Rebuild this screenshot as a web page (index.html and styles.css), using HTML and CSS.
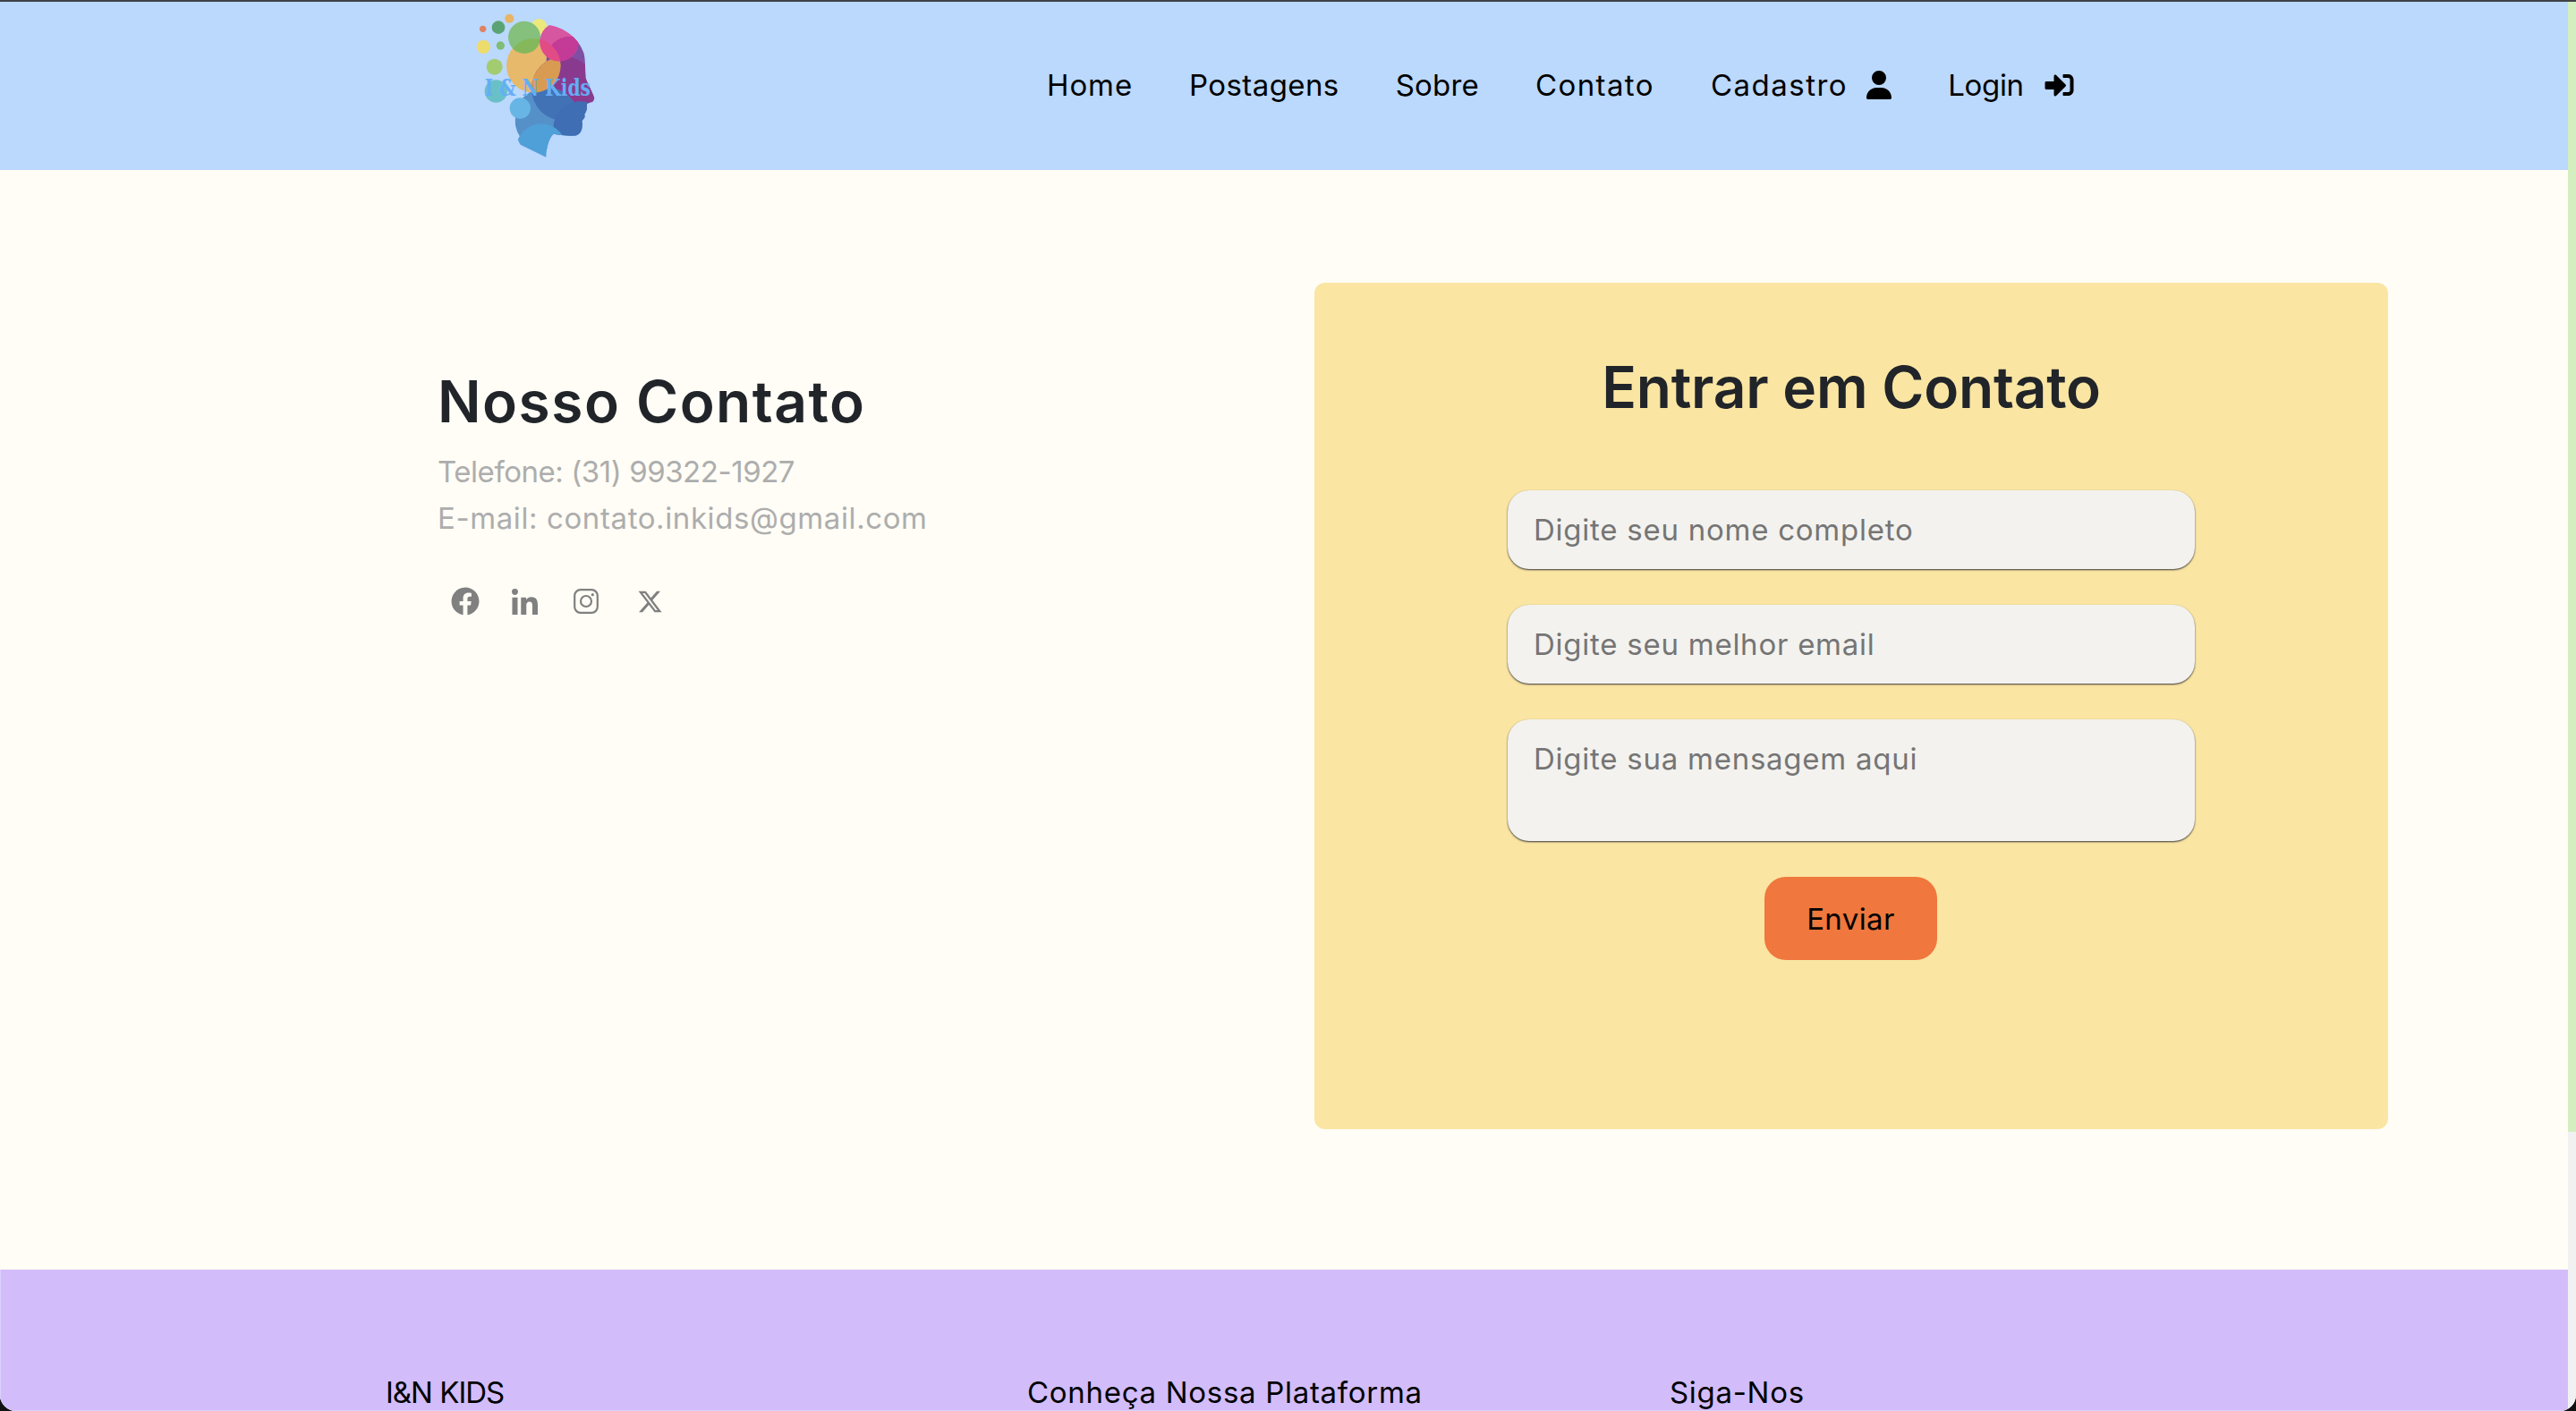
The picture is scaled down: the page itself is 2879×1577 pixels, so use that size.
FILE: index.html
```html
<!DOCTYPE html>
<html lang="pt-BR">
<head>
  <meta charset="UTF-8">
  <meta name="viewport" content="width=device-width, initial-scale=1.0">
  <title>I&amp;N Kids - Contato</title>
  <link rel="stylesheet" href="styles.css">
</head>
<body>
  <div class="window">
    <div class="page">
      <!-- Menu -->
      <header class="topbar">
        <svg class="logo" viewBox="0 0 900 570" aria-label="I &amp; N Kids">
          <defs>
            <clipPath id="head">
              <path d="M395 83C450 90 500 125 518 180C525 215 520 240 525 265C535 290 550 315 555 335C550 345 530 342 527 350C530 365 525 375 520 385C525 395 515 400 512 405C515 430 510 450 490 455C460 457 430 450 415 450C400 465 392 495 391 527L305 485C290 460 283 420 288 395C280 340 330 300 350 260L360 100Z"/>
            </clipPath>
            <clipPath id="big-orange"><circle cx="349" cy="220" r="91"/></clipPath>
            <clipPath id="lower-blue"><circle cx="393" cy="400" r="107"/></clipPath>
            <clipPath id="pink"><circle cx="435" cy="140" r="65"/></clipPath>
          </defs>
          <circle cx="268" cy="62" r="15" fill="#e8b466"/>
          <circle cx="179" cy="97" r="11" fill="#e0825f"/>
          <circle cx="231" cy="92" r="22" fill="#5aa374"/>
          <circle cx="367" cy="90" r="27" fill="#ece97c"/>
          <circle cx="181" cy="157" r="23" fill="#eddc6c"/>
          <circle cx="238" cy="153" r="14" fill="#7fbe74"/>
          <circle cx="218" cy="224" r="27" fill="#a3cc70"/>
          <circle cx="223" cy="306" r="38" fill="#6ac0c8"/>
          <circle cx="349" cy="220" r="91" fill="#e6b96b"/>
          <circle cx="318" cy="125" r="54" fill="#85c07c"/>
          <g clip-path="url(#big-orange)"><circle cx="318" cy="125" r="54" fill="#85b85a"/></g>
          <g clip-path="url(#head)">
            <circle cx="470" cy="200" r="78" fill="#7f4fa3"/>
            <circle cx="450" cy="297" r="108" fill="#8a3a8e"/>
            <circle cx="393" cy="400" r="107" fill="#5590c8"/>
            <g clip-path="url(#lower-blue)"><circle cx="450" cy="297" r="108" fill="#4272b6"/></g>
            <circle cx="505" cy="430" r="90" fill="#3f6eb4"/>
            <circle cx="375" cy="500" r="85" fill="#4f9fd8"/>
          </g>
          <g clip-path="url(#big-orange)"><circle cx="450" cy="297" r="108" fill="#d99b52"/></g>
          <g clip-path="url(#head)">
            <circle cx="435" cy="140" r="65" fill="#d6569f"/>
            <g clip-path="url(#pink)">
              <circle cx="470" cy="200" r="78" fill="#c43a97"/>
              <circle cx="349" cy="220" r="91" fill="#e14c86"/>
            </g>
          </g>
          <circle cx="304" cy="363" r="35" fill="#66b5e5"/>
          <text class="logo-text" x="185" y="322" textLength="355" lengthAdjust="spacingAndGlyphs">I &amp; N Kids</text>
        </svg>
        <nav class="menu">
          <a href="#">Home</a>
          <a href="#">Postagens</a>
          <a href="#">Sobre</a>
          <a href="#">Contato</a>
          <a href="#">Cadastro
            <svg class="icon-user" viewBox="0 0 448 512"><path d="M224 256A128 128 0 1 0 224 0a128 128 0 1 0 0 256zm-45.7 48C79.8 304 0 383.8 0 482.3C0 498.7 13.3 512 29.7 512H418.3c16.4 0 29.7-13.3 29.7-29.7C448 383.8 368.2 304 269.7 304H178.3z"/></svg>
          </a>
          <a href="#">Login
            <svg class="icon-login" viewBox="0 0 512 448"><path d="M416 416h-84c-6.600 0-12-5.400-12-12v-40c0-6.600 5.400-12 12-12h84c17.700 0 32-14.300 32-32V128c0-17.700-14.300-32-32-32h-84c-6.600 0-12-5.400-12-12V44c0-6.600 5.400-12 12-12h84c53 0 96 43 96 96v192c0 53-43 96-96 96zm-47-201L201 47c-15-15-41-4.500-41 17v96H24c-13.300 0-24 10.700-24 24v96c0 13.300 10.700 24 24 24h136v96c0 21.500 26 32 41 17l168-168c9.300-9.400 9.300-24.600 0-34z"/></svg>
          </a>
        </nav>
      </header>

      <!-- Contato -->
      <main class="content">
        <section class="contact-info">
          <h2>Nosso Contato</h2>
          <p class="phone">Telefone: (31) 99322-1927</p>
          <p class="email">E-mail: contato.inkids@gmail.com</p>
          <div class="social">
            <a href="#"><svg class="icon-fb" viewBox="0 0 512 512"><path d="M504 256C504 119 393 8 256 8S8 119 8 256c0 123.780 90.690 226.380 209.250 245V327.690h-63V256h63v-54.640c0-62.150 37-96.480 93.670-96.480 27.140 0 55.520 4.840 55.520 4.840v61h-31.280c-30.800 0-40.410 19.120-40.410 38.730V256h68.780l-11 71.690h-57.780V501C413.310 482.380 504 379.780 504 256z"/></svg></a>
            <a href="#"><svg class="icon-in" viewBox="0 0 448 448"><path d="M100.280 448H7.400V148.900h92.880zM53.790 108.100C24.090 108.100 0 83.500 0 53.800a53.790 53.790 0 0 1 107.580 0c0 29.700-24.100 54.300-53.790 54.300zM447.900 448h-92.680V302.400c0-34.700-.7-79.200-48.290-79.200-48.290 0-55.690 37.700-55.690 76.700V448h-92.780V148.900h89.080v40.800h1.300c12.400-23.500 42.690-48.300 87.880-48.300 94 0 111.280 61.900 111.280 142.300V448z"/></svg></a>
            <a href="#"><svg class="icon-ig" viewBox="0 0 28 28"><rect x="1.200" y="1.200" width="25.600" height="25.600" rx="6.500" fill="none" stroke="currentColor" stroke-width="2.200"/><circle cx="14" cy="14" r="6" fill="none" stroke="currentColor" stroke-width="2.200"/><circle cx="21.300" cy="6.700" r="1.600"/></svg></a>
            <a href="#"><svg class="icon-x" viewBox="0 0 512 512"><path d="M389.200 48h70.600L305.600 224.200 487 464H345L233.700 318.600 106.500 464H35.800L200.700 275.500 26.800 48H172.400L272.900 180.900 389.200 48zM364.400 421.800h39.100L151.100 88h-42L364.400 421.800z"/></svg></a>
          </div>
        </section>

        <section class="contact-card">
          <h2>Entrar em Contato</h2>
          <form class="contact-form">
            <input type="text" placeholder="Digite seu nome completo">
            <input type="email" placeholder="Digite seu melhor email">
            <textarea placeholder="Digite sua mensagem aqui"></textarea>
            <button type="button">Enviar</button>
          </form>
        </section>
      </main>

      <!-- Rodapé -->
      <footer class="footer">
        <span class="footer-brand">I&amp;N KIDS</span>
        <span>Conheça Nossa Plataforma</span>
        <span>Siga-Nos</span>
      </footer>
    </div>

    <!-- Barra de rolagem -->
    <div class="scrollbar"><div class="thumb"></div></div>
  </div>
</body>
</html>
```

FILE: styles.css
```css
* {
  box-sizing: border-box;
}

html,
body {
  height: 100%;
}

body {
  margin: 0;
  overflow: hidden;
  background: #111;
  font-family: Inter, "Liberation Sans", sans-serif;
}

/* Janela com canto arredondado */
.window {
  display: flex;
  height: 1577px;
  overflow: hidden;
  border-top: 2px solid #3f4347;
  border-radius: 0 0 18px 18px;
  background: #fffdf6;
}

.page {
  display: flex;
  flex-direction: column;
  flex: 1;
  min-width: 0;
}

.scrollbar {
  width: 9px;
  background: #f1f1f1;
}

.thumb {
  height: 1263px;
  background: #d3efc0;
}

/* Menu */
.topbar {
  display: flex;
  align-items: flex-start;
  height: 188px;
  background: #bbd8fd;
}

.logo {
  width: 300px;
  height: 190px;
  margin: -2px 0 0 480px;
}

.logo-text {
  fill: #64aef5;
  font-family: "DejaVu Serif", serif;
  font-size: 80px;
  font-weight: bold;
}

.menu {
  display: flex;
  gap: 63px;
  margin: 73px 0 0 390px;
}

.menu a {
  display: flex;
  align-items: center;
  gap: 24px;
  color: #000;
  font-size: 33px;
  line-height: 40px;
  text-decoration: none;
  letter-spacing: 0.4px;
}

.menu a:nth-child(1) {
  letter-spacing: 0.9px;
}

.menu a:nth-child(3) {
  letter-spacing: 0.2px;
}

.menu a:nth-child(4) {
  letter-spacing: 1.4px;
}

.menu a:nth-child(5) {
  gap: 21px;
  letter-spacing: 1.5px;
}

.menu a:nth-child(6) {
  gap: 23px;
  letter-spacing: -0.3px;
}

.icon-user {
  width: 28px;
  height: 32px;
}

.icon-login {
  width: 33px;
  height: 28px;
}

/* Contato */
.content {
  display: flex;
  align-items: flex-start;
  flex: 1;
  height: 1229px;
  padding-top: 126px;
  background: #fffdf6;
}

.contact-info {
  width: 980px;
  margin-left: 489px;
  padding-top: 95px;
}

.contact-info h2 {
  margin: 0 0 14px;
  color: #212529;
  font-size: 64px;
  font-weight: 600;
  line-height: 76px;
  letter-spacing: 1.5px;
}

.contact-info p {
  margin: 0;
  color: #adadad;
  font-size: 33px;
  line-height: 52px;
}

.phone {
  letter-spacing: -0.45px;
}

.email {
  letter-spacing: 0.6px;
}

.social {
  display: flex;
  align-items: center;
  margin: 51px 0 0 15px;
  color: #808080;
}

.social a {
  display: flex;
  color: inherit;
}

.social svg {
  display: block;
  fill: currentColor;
}

.icon-fb {
  width: 32px;
  height: 32px;
}

.icon-in {
  width: 29px;
  height: 29px;
  margin-left: 36px;
}

.icon-ig {
  width: 28px;
  height: 28px;
  margin-left: 40px;
}

.icon-x {
  width: 29px;
  height: 29px;
  margin-left: 43px;
}

.contact-card {
  display: flex;
  flex-direction: column;
  align-items: center;
  width: 1200px;
  height: 946px;
  padding-top: 72px;
  border-radius: 12px;
  background: #fae5a3;
}

.contact-card h2 {
  margin: 0 0 70px;
  color: #212529;
  font-size: 64px;
  font-weight: 600;
  line-height: 90px;
  letter-spacing: -0.2px;
}

.contact-form {
  display: flex;
  flex-direction: column;
  align-items: center;
  gap: 40px;
  width: 768px;
}

.contact-form input,
.contact-form textarea {
  display: block;
  width: 100%;
  padding: 0 29px;
  border: 0;
  border-radius: 24px;
  outline: 0;
  background: #f3f2ee;
  box-shadow: 0 1px 2px #333;
  color: #333;
  font-family: inherit;
  font-size: 33px;
  letter-spacing: 0.75px;
}

.contact-form input {
  height: 88px;
}

.contact-form textarea {
  height: 136px;
  padding-top: 24px;
  resize: none;
}

.contact-form ::placeholder {
  color: #757575;
  opacity: 1;
}

.contact-form button {
  width: 193px;
  height: 93px;
  margin-right: 1px;
  border: 0;
  border-radius: 24px;
  background: #f0773d;
  color: #000;
  font-family: inherit;
  font-size: 33px;
  letter-spacing: 0.4px;
}

/* Rodapé */
.footer {
  display: grid;
  grid-template-columns: 717px 718px 1fr;
  flex: none;
  height: 158px;
  padding: 120px 0 0 430px;
  border-left: 1px solid #dccffc;
  border-bottom: 1px solid #dccffc;
  background: #d2bdfa;
  color: #000;
  font-size: 33px;
  line-height: 34px;
  letter-spacing: 0.7px;
}

.footer-brand {
  letter-spacing: -1px;
}
```
